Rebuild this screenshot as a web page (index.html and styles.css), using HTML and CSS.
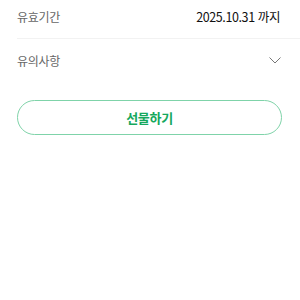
FILE: index.html
```html
<!DOCTYPE html>
<html lang="ko">
<head>
<meta charset="utf-8">
<link rel="stylesheet" href="styles.css">
</head>
<body>
<div class="page">
  <div class="row row-border">
    <span class="label">유효기간</span>
    <span class="value">2025.10.31 까지</span>
  </div>
  <div class="row">
    <span class="label">유의사항</span>
    <svg class="chev" width="12" height="7" viewBox="0 0 12 7"><path d="M0.5 0.5 L6 6 L11.5 0.5" fill="none" stroke="#777" stroke-width="1"/></svg>
  </div>
  <div class="actions">
    <button class="gift">선물하기</button>
  </div>
</div>
</body>
</html>
```
FILE: styles.css
```css
html, body { margin: 0; padding: 0; background: #fff; }
body { font-family: "Noto Sans CJK KR", "Noto Sans", sans-serif; }
.page { padding: 0 18px 0 17px; }
.row {
  display: flex;
  align-items: center;
  justify-content: space-between;
}
.row-border {
  border-bottom: 1px solid #f2f2f2;
  margin-right: -18px;
  padding-right: 20px;
  margin-top: -5px;
  height: 43px;
}
.row + .row { height: 43px; }
.label { font-size: 12px; color: #666; letter-spacing: -0.3px; }
.value { font-size: 12.5px; color: #111; font-weight: 400; letter-spacing: -0.4px; }
.chev { margin-right: 1px; }
.actions { padding-top: 18px; }
.gift {
  display: block;
  width: 100%;
  height: 35px;
  border: 1px solid #7fd3a9;
  border-radius: 18px;
  background: #fff;
  color: #16a85d;
  font-family: inherit;
  font-size: 13px;
  font-weight: 700;
  letter-spacing: -0.3px;
}
```
